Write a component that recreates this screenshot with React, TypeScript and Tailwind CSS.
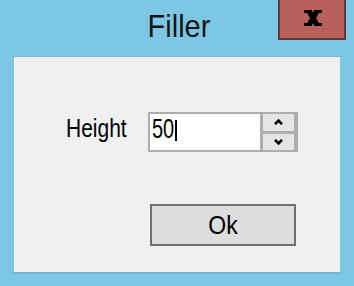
import React from "react";

export default function App() {
  return (
    <div className="w-[354px] h-[286px] bg-[#7dc7e5] overflow-hidden font-['Liberation_Sans',Arial,sans-serif] text-black">
      {/* Title bar */}
      <div className="relative h-[56px]">
        <div className="flex justify-center pl-[4px] pt-[12px]">
          <span className="inline-block text-[29px] leading-[29px] text-[#151515] scale-y-[1.06]">Filler</span>
        </div>
        <div className="absolute top-0 right-[8px] w-[68px] h-[40px] bg-[#b8605a] border-x-2 border-b-2 border-[#5a3b3b]">
          <svg className="absolute left-[24px] top-[10px]" width="18" height="16" viewBox="0 0 18 16">
            <rect x="0" y="0" width="7.5" height="3" fill="#000" />
            <rect x="10.5" y="0" width="7.5" height="3" fill="#000" />
            <rect x="0" y="13" width="7.5" height="3" fill="#000" />
            <rect x="10.5" y="13" width="7.5" height="3" fill="#000" />
            <polygon points="1.5,0 7.5,0 16.5,16 10.5,16" fill="#000" />
            <polygon points="10.5,0 16.5,0 7.5,16 1.5,16" fill="#000" />
          </svg>
        </div>
      </div>

      {/* Dialog body */}
      <div className="mx-[12px] flex flex-col">
        <div className="h-px bg-[#8cb2cc]" />
        <div className="mx-[2px] h-[215px] bg-[#f0f0f0] flex flex-col">
          <div className="mt-[55px] flex items-start">
            <div className="ml-[52px] w-[82px] mt-[5px]">
              <span className="inline-block text-[21px] leading-[21px] scale-y-[1.2]">Height</span>
            </div>
            <div className="w-[150px] h-[40px] bg-[#adadad] p-[2px] flex">
              <div className="w-[110px] h-full bg-white flex items-start pl-[2px]">
                <span className="inline-block mt-[5px] text-[20px] leading-[20px] scale-y-[1.35]">50</span>
                <span className="ml-[1px] mt-[6px] w-[2px] h-[21px] bg-black" />
              </div>
              <div className="ml-[3px] w-[31px] flex flex-col gap-[3px]">
                <div className="flex-1 bg-[#e5e5e5] flex items-center justify-center pr-[1px]">
                  <svg width="9" height="6" viewBox="0 0 9 6">
                    <polyline points="1,5.2 4.5,1.6 8,5.2" fill="none" stroke="#000" strokeWidth="2.6" strokeLinejoin="miter" />
                  </svg>
                </div>
                <div className="flex-1 bg-[#e5e5e5] flex items-center justify-center pr-[1px]">
                  <svg width="9" height="6" viewBox="0 0 9 6">
                    <polyline points="1,0.8 4.5,4.4 8,0.8" fill="none" stroke="#000" strokeWidth="2.6" strokeLinejoin="miter" />
                  </svg>
                </div>
              </div>
            </div>
          </div>
          <div className="mt-[52px] pl-[136px]">
            <div className="w-[146px] h-[42px] bg-[#dddddd] border-2 border-[#707070] flex items-center justify-center">
              <span className="inline-block text-[23px] leading-[23px] scale-y-[1.15]">Ok</span>
            </div>
          </div>
        </div>
        <div className="h-[2px] bg-[#76b6d5]" />
      </div>
    </div>
  );
}
